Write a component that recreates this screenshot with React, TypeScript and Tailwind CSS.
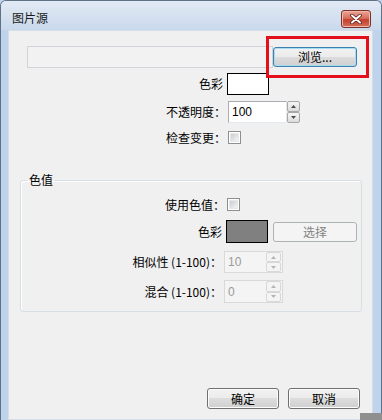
import React from "react";

const FONT = "font-['Microsoft_YaHei','Noto_Sans_CJK_SC',sans-serif]";

function Spinner() {
  const btn = "border border-[#a7a7a7] bg-[linear-gradient(#f6f6f6,#dcdcdc)]";
  return (
    <div className="flex flex-col w-[13px] h-[22px]">
      <div className={`flex-1 flex items-center justify-center rounded-[2px] ${btn}`}>
        <svg width="5" height="3" viewBox="0 0 5 3">
          <path d="M2.5 0 L5 3 L0 3 Z" fill="#4d4d4d" />
        </svg>
      </div>
      <div className={`flex-1 flex items-center justify-center rounded-[2px] ${btn}`}>
        <svg width="5" height="3" viewBox="0 0 5 3">
          <path d="M0 0 L5 0 L2.5 3 Z" fill="#4d4d4d" />
        </svg>
      </div>
    </div>
  );
}

function DisabledSpinner({ h }: { h: string }) {
  return (
    <div className={`flex flex-col w-[15px] ${h}`}>
      <div className="flex-1 flex items-center justify-center border border-[#d8d8d8] bg-[#f4f4f4] rounded-[2px]">
        <svg width="5" height="3" viewBox="0 0 5 3"><path d="M2.5 0 L5 3 L0 3 Z" fill="#b4b4b4" /></svg>
      </div>
      <div className="flex-1 flex items-center justify-center border border-[#d8d8d8] bg-[#f4f4f4] rounded-[2px]">
        <svg width="5" height="3" viewBox="0 0 5 3"><path d="M0 0 L5 0 L2.5 3 Z" fill="#b4b4b4" /></svg>
      </div>
    </div>
  );
}

function Checkbox() {
  return (
    <div className="w-[13px] h-[13px] border border-[#8e8f8f] bg-white p-[1px]">
      <div className="w-full h-full bg-[linear-gradient(135deg,#c9cdd3,#f4f4f4)] border border-[#e8e8e8]" />
    </div>
  );
}

function WinButton({
  children,
  className = "",
  focused,
  disabled,
}: {
  children: React.ReactNode;
  className?: string;
  focused?: boolean;
  disabled?: boolean;
}) {
  let cls =
    "border border-[#707070] bg-[linear-gradient(#f2f2f2_0%,#ebebeb_50%,#dddddd_50%,#cfcfcf_100%)] shadow-[inset_0_0_0_1px_#fcfcfc] text-black";
  if (focused)
    cls =
      "border border-[#3c7fb1] bg-[linear-gradient(#f2f2f2_0%,#ebebeb_50%,#dddddd_50%,#cfcfcf_100%)] shadow-[inset_0_0_0_1px_#a8dcf3] text-black";
  if (disabled) cls = "border border-[#adb2b5] bg-[#f4f4f4] text-[#838383]";
  return (
    <div
      className={`flex items-center justify-center rounded-[3px] text-[12px] leading-none ${cls} ${className}`}
    >
      {children}
    </div>
  );
}

export default function App() {
  return (
    <div
      className={`relative w-[382px] h-[420px] overflow-hidden bg-[#bfd4ec] ${FONT} text-[12px] text-black`}
    >
      <div className="flex flex-col w-full h-full border-l border-t border-r border-[#5f7185] rounded-t-[6px] overflow-hidden">
        {/* Title bar */}
        <div className="h-[29px] flex items-start justify-between bg-[linear-gradient(#e2eaf4,#c9d9ec)] pl-[11px] pr-[10px]">
          <div className="mt-[10px] text-[12px] leading-[14px] text-[#1a1a1a]">图片源</div>
          <div className="mt-[9px] w-[30px] h-[18px] rounded-[3px] border border-[#7a3229] bg-[linear-gradient(#eaa596_0%,#d86f5e_45%,#c2402d_55%,#d3705c_100%)] flex items-center justify-center shadow-[inset_0_0_0_1px_#f0b8ad]">
            <svg width="12" height="10" viewBox="0 0 12 10">
              <path d="M2 1.5 L10 8.5 M10 1.5 L2 8.5" stroke="#5b1f18" strokeWidth="3.6" strokeLinecap="round" />
              <path d="M2 1.5 L10 8.5 M10 1.5 L2 8.5" stroke="#ffffff" strokeWidth="2" strokeLinecap="round" />
            </svg>
          </div>
        </div>
        {/* Body */}
        <div className="flex flex-1">
          <div className="w-[7px]" />
          <div className="flex-1 flex flex-col bg-[#f0f0f0] border border-[#d4dde8]">
            {/* Path row */}
            <div className="mt-[15px] flex items-center ml-[18px] h-[22px]">
              <div className="w-[246px] h-[22px] border border-[#d0d3d7] bg-[#f2f2f2]" />
              <WinButton focused className="w-[84px] h-[20px]">
                浏览...
              </WinButton>
            </div>
            {/* 色彩 */}
            <div className="mt-[5px] flex items-center h-[22px]">
              <div className="w-[218px] text-right pr-[4px] leading-[16px]">色彩</div>
              <div className="w-[42px] h-[22px] border border-black bg-white" />
            </div>
            {/* 不透明度 */}
            <div className="mt-[6px] flex items-center h-[22px]">
              <div className="w-[219px] text-right pr-[2px] leading-[16px]">不透明度：</div>
              <div className="w-[59px] h-[22px] border border-[#abadb3] border-b-[#e3e9ef] border-r-[#e3e9ef] bg-white flex items-center pl-[3px] font-['Liberation_Sans',sans-serif] text-[12px]">
                100
              </div>
              <Spinner />
            </div>
            {/* 检查变更 */}
            <div className="mt-[8px] flex items-center h-[13px]">
              <div className="w-[219px] text-right pr-[2px] leading-[16px]">检查变更：</div>
              <Checkbox />
            </div>
            {/* Group */}
            <fieldset className="mt-[28px] ml-[11px] w-[342px] border border-[#d5dfe5] rounded-[3px] shadow-[inset_1px_1px_0_#ffffff] pb-[8px]">
              <legend className="ml-[6px] px-[2px] leading-[16px] text-[12px]">色值</legend>
              <div className="mt-[10px] flex items-center h-[13px]">
                <div className="w-[206px] text-right pr-[2px] leading-[16px]">使用色值：</div>
                <Checkbox />
              </div>
              <div className="mt-[9px] flex items-center h-[23px]">
                <div className="w-[205px] text-right pr-[4px] leading-[16px]">色彩</div>
                <div className="w-[42px] h-[23px] border border-black bg-[#808080]" />
                <WinButton disabled className="ml-[5px] w-[84px] h-[20px]">
                  选择
                </WinButton>
              </div>
              <div className="mt-[8px] flex items-center h-[22px]">
                <div className="w-[203px] text-right pr-[2px] leading-[16px]">相似性 (1-100)：</div>
                <div className="w-[59px] h-[22px] border border-[#d9d9d9] bg-[#f4f4f4] flex items-center justify-between pl-[3px] pr-[1px] text-[#9a9a9a] font-['Liberation_Sans',sans-serif]">
                  <span>10</span>
                  <DisabledSpinner h="h-[20px]" />
                </div>
              </div>
              <div className="mt-[7px] flex items-center h-[23px]">
                <div className="w-[203px] text-right pr-[2px] leading-[16px]">混合 (1-100)：</div>
                <div className="w-[59px] h-[23px] border border-[#d9d9d9] bg-[#f4f4f4] flex items-center justify-between pl-[3px] pr-[1px] text-[#9a9a9a] font-['Liberation_Sans',sans-serif]">
                  <span>0</span>
                  <DisabledSpinner h="h-[21px]" />
                </div>
              </div>
            </fieldset>
            {/* Bottom buttons */}
            <div className="mt-auto mb-[10px] flex justify-end gap-[9px] pr-[12px]">
              <WinButton className="w-[72px] h-[21px]">确定</WinButton>
              <WinButton className="w-[72px] h-[21px]">取消</WinButton>
            </div>
          </div>
          <div className="w-[8px]" />
        </div>
      </div>

      {/* Red annotation box */}
      <div className="absolute left-[266px] top-[36px] w-[103px] h-[42px] border-[3px] border-[#e3101c]" />

      {/* Watermark corner */}
      <div className="absolute left-[360px] top-[413px] w-[22px] h-[7px] bg-[#8f8f8f]" />
    </div>
  );
}
